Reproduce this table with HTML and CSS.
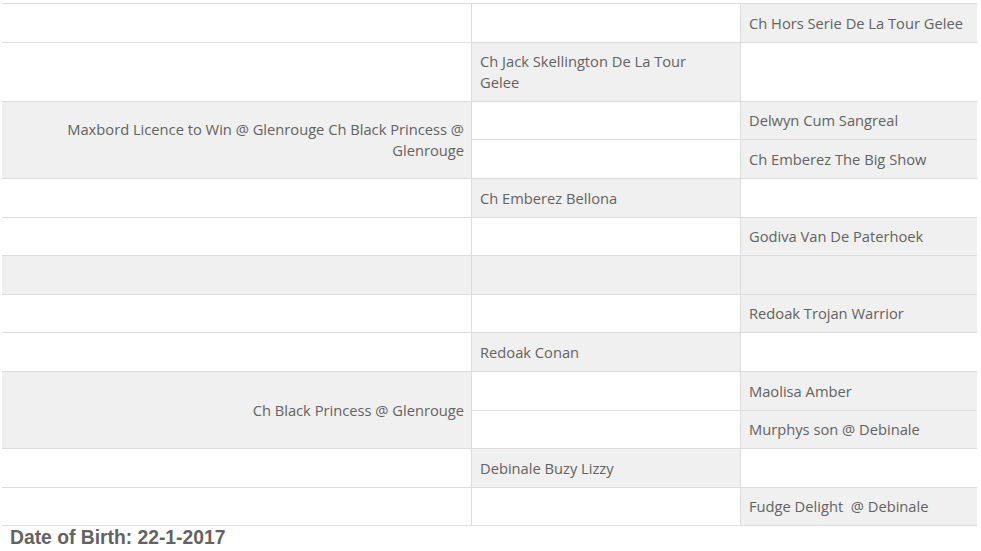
FILE: index.html
```html
<!DOCTYPE html>
<html>
<head>
<meta charset="utf-8">
<link rel="stylesheet" href="styles.css">
</head>
<body>
<div class="page">
  <div class="pedigree">
    <div class="cell c1"></div><div class="cell c2"></div><div class="cell c3 g">Ch Hors Serie De La Tour Gelee</div>
    <div class="cell c1"></div><div class="cell c2 g">Ch Jack Skellington De La Tour<br>Gelee</div><div class="cell c3"></div>
    <div class="cell c1 g span">Maxbord Licence to Win @ Glenrouge Ch Black Princess @ Glenrouge</div><div class="cell c2"></div><div class="cell c3 g">Delwyn Cum Sangreal</div>
    <div class="cell c2"></div><div class="cell c3 g">Ch Emberez The Big Show</div>
    <div class="cell c1"></div><div class="cell c2 g">Ch Emberez Bellona</div><div class="cell c3"></div>
    <div class="cell c1"></div><div class="cell c2"></div><div class="cell c3 g">Godiva Van De Paterhoek</div>
    <div class="cell c1 g"></div><div class="cell c2 g"></div><div class="cell c3 g"></div>
    <div class="cell c1"></div><div class="cell c2"></div><div class="cell c3 g">Redoak Trojan Warrior</div>
    <div class="cell c1"></div><div class="cell c2 g">Redoak Conan</div><div class="cell c3"></div>
    <div class="cell c1 g span">Ch Black Princess @ Glenrouge</div><div class="cell c2"></div><div class="cell c3 g">Maolisa Amber</div>
    <div class="cell c2"></div><div class="cell c3 g">Murphys son @ Debinale</div>
    <div class="cell c1"></div><div class="cell c2 g">Debinale Buzy Lizzy</div><div class="cell c3"></div>
    <div class="cell c1"></div><div class="cell c2"></div><div class="cell c3 g">Fudge Delight&nbsp; @ Debinale</div>
  </div>
  <div class="dob">Date of Birth: 22-1-2017</div>
</div>
</body>
</html>
```
FILE: styles.css
```css
html, body {
  margin: 0;
  padding: 0;
  background: #fff;
}
.page {
  padding: 3px 0 0 2px;
}
.pedigree {
  display: grid;
  width: 975px;
  grid-template-columns: 469px 269px 237px;
  grid-template-rows: 39px 59px 38px 39px 39px 38px 39px 38px 39px 39px 38px 39px 38px;
  border-bottom: 1px solid #dddddd;
  font-family: "Open Sans", "DejaVu Sans", sans-serif;
  font-size: 14.7px;
  line-height: 21px;
  color: #636363;
}
.cell {
  box-sizing: border-box;
  border-top: 1px solid #dddddd;
  padding: 0 8px;
  display: flex;
  align-items: center;
  background: #ffffff;
}
.c2, .c3 {
  border-left: 1px solid #dddddd;
  padding-left: 8px;
}
.c1 {
  justify-content: flex-end;
  text-align: right;
  padding-right: 7px;
}
.span {
  grid-row: span 2;
}
.g {
  background: #f0f0f0;
}
.dob {
  margin: 1px 0 0 8px;
  font-family: "Liberation Sans", Arial, sans-serif;
  font-weight: bold;
  font-size: 19.3px;
  line-height: 22px;
  color: #636363;
}
```
